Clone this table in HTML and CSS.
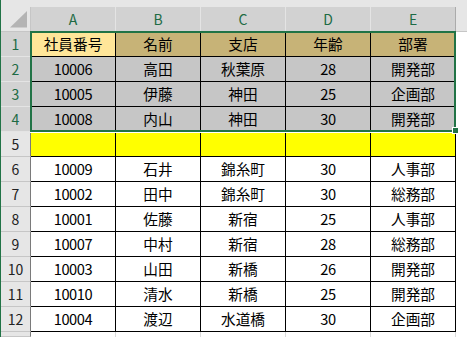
FILE: index.html
```html
<!DOCTYPE html>
<html lang="ja">
<head>
<meta charset="utf-8">
<link rel="stylesheet" href="styles.css">
</head>
<body>
<div class="app">
  <div class="topband"></div>
  <div class="sheet">
    <div class="corner"><svg class="tri" width="29" height="24" viewBox="0 0 29 24"><polygon points="9,20.5 26,20.5 26,4" fill="#b4b4b4"/></svg></div>
    <div class="ch">A</div><div class="ch">B</div><div class="ch">C</div><div class="ch">D</div><div class="ch last">E</div><div class="chfill"></div>

    <div class="rh sel">1</div>
    <div class="c act">社員番号</div><div class="c tan">名前</div><div class="c tan">支店</div><div class="c tan">年齢</div><div class="c tan">部署</div><div class="fill"></div>

    <div class="rh sel">2</div>
    <div class="c gray num">10006</div><div class="c gray">高田</div><div class="c gray">秋葉原</div><div class="c gray num">28</div><div class="c gray">開発部</div><div class="fill"></div>

    <div class="rh sel">3</div>
    <div class="c gray num">10005</div><div class="c gray">伊藤</div><div class="c gray">神田</div><div class="c gray num">25</div><div class="c gray">企画部</div><div class="fill"></div>

    <div class="rh sel">4</div>
    <div class="c gray num">10008</div><div class="c gray">内山</div><div class="c gray">神田</div><div class="c gray num">30</div><div class="c gray">開発部</div><div class="fill"></div>

    <div class="rh">5</div>
    <div class="c yel"></div><div class="c yel"></div><div class="c yel"></div><div class="c yel"></div><div class="c yel"></div><div class="fill"></div>

    <div class="rh">6</div>
    <div class="c num">10009</div><div class="c">石井</div><div class="c">錦糸町</div><div class="c num">30</div><div class="c">人事部</div><div class="fill"></div>

    <div class="rh">7</div>
    <div class="c num">10002</div><div class="c">田中</div><div class="c">錦糸町</div><div class="c num">30</div><div class="c">総務部</div><div class="fill"></div>

    <div class="rh">8</div>
    <div class="c num">10001</div><div class="c">佐藤</div><div class="c">新宿</div><div class="c num">25</div><div class="c">人事部</div><div class="fill"></div>

    <div class="rh">9</div>
    <div class="c num">10007</div><div class="c">中村</div><div class="c">新宿</div><div class="c num">28</div><div class="c">総務部</div><div class="fill"></div>

    <div class="rh">10</div>
    <div class="c num">10003</div><div class="c">山田</div><div class="c">新橋</div><div class="c num">26</div><div class="c">開発部</div><div class="fill"></div>

    <div class="rh">11</div>
    <div class="c num">10010</div><div class="c">清水</div><div class="c">新橋</div><div class="c num">25</div><div class="c">開発部</div><div class="fill"></div>

    <div class="rh">12</div>
    <div class="c num">10004</div><div class="c">渡辺</div><div class="c">水道橋</div><div class="c num">30</div><div class="c">企画部</div><div class="fill"></div>

    <div class="rh"></div>
    <div class="blank"></div><div class="blank"></div><div class="blank"></div><div class="blank"></div><div class="blank"></div><div class="fill"></div>
  </div>
  <div class="selection"></div>
  <div class="handle"></div>
</div>
</body>
</html>
```
FILE: styles.css
```css
* { box-sizing: border-box; margin: 0; padding: 0; }
body {
  margin: 0;
  background: #fff;
  font-family: "Noto Sans CJK JP", "Noto Sans", sans-serif;
}
.app {
  position: relative;
  width: 467px;
  height: 337px;
  border-left: 1px solid #217346;
  overflow: hidden;
  display: flex;
  flex-direction: column;
  background: #fff;
}
.topband {
  height: 7px;
  flex: none;
  background: #e6e6e6;
}
.sheet {
  flex: 1;
  display: grid;
  grid-template-columns: 30px repeat(5, 85px) 1fr;
  grid-template-rows: 25px repeat(12, 25px) 1fr;
}
.corner {
  background: #e6e6e6;
  border-right: 1px solid #c6c6c6;
  border-bottom: 1px solid #c6c6c6;
}
.tri { display: block; }
.ch {
  background: #d2d2d2;
  color: #1d6b44;
  border-right: 1px solid #e4e4e4;
  border-bottom: 1px solid #217346;
  display: flex;
  align-items: center;
  justify-content: center;
  font-size: 14px;
  line-height: 1;
}
.ch.last { border-right-color: #ababab; }
.chfill {
  background: #e6e6e6;
  border-bottom: 1px solid #c6c6c6;
}
.rh {
  background: #e6e6e6;
  color: #222;
  border-right: 1px solid #7a7a7a;
  border-bottom: 1px solid #c6c6c6;
  display: flex;
  align-items: center;
  justify-content: center;
  font-size: 14px;
  line-height: 1;
}
.rh.sel {
  background: #d2d2d2;
  color: #1d6b44;
  border-bottom-color: #e4e4e4;
}
.c {
  border-right: 1px solid #000;
  border-bottom: 1px solid #000;
  display: flex;
  align-items: center;
  justify-content: center;
  font-size: 14.67px;
  line-height: 1;
  color: #000;
  white-space: nowrap;
}
.num { letter-spacing: -0.4px; }
.act { background: #ffe699; }
.tan { background: #c7b377; }
.gray { background: #c6c6c6; }
.yel { background: #ffff00; }
.blank { border-right: 1px solid #dadada; }
.selection {
  position: absolute;
  left: 29px;
  top: 31px;
  width: 426px;
  height: 101px;
  border: 2px solid #217346;
  box-shadow: 0 1px 0 #fff;
}
.handle {
  position: absolute;
  left: 451px;
  top: 127px;
  width: 7px;
  height: 7px;
  background: #217346;
  border: 1px solid #fff;
}
```
